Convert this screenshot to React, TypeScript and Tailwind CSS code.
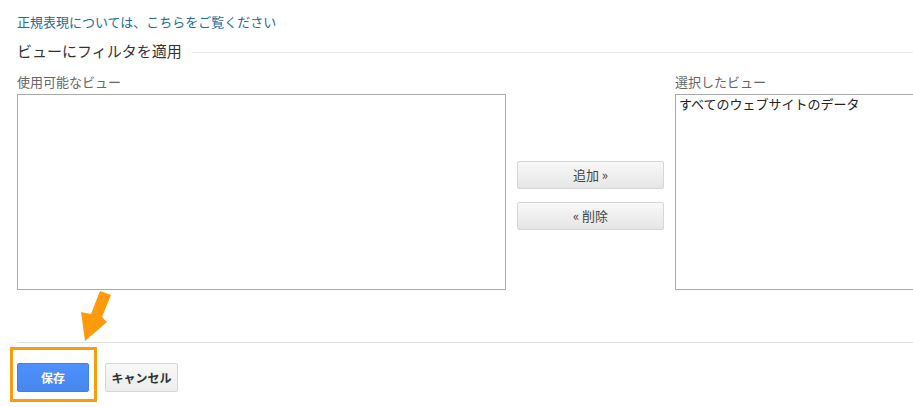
import React from 'react';

const font = { fontFamily: '"Noto Sans CJK JP", "Noto Sans", sans-serif' };

const ArrowMark: React.FC = () => (
  <svg
    className="absolute left-[78px] top-[288px]"
    width="36"
    height="56"
    viewBox="78 288 36 56"
  >
    <polygon
      points="100,291 111,295 102,317 107,322 85,341 81,312 91,314"
      fill="#ff9a0a"
    />
  </svg>
);

const App: React.FC = () => {
  return (
    <div className="relative w-[913px] h-[407px] overflow-hidden bg-white" style={font}>
      {/* Help link */}
      <div className="pl-[17px] pt-[8px] h-[40px]">
        <a className="text-[13px] leading-[20px] text-[#236b98] cursor-pointer">
          正規表現については、こちらをご覧ください
        </a>
      </div>

      {/* Section heading */}
      <div className="flex items-center pl-[17px] h-[24px]">
        <h2 className="text-[15px] leading-[20px] text-[#333] -mt-[2px]">ビューにフィルタを適用</h2>
        <div className="flex-1 ml-[10px] h-px bg-[#e5e5e5]" />
      </div>

      {/* View selector */}
      <div className="flex pl-[17px] pt-[10px]">
        <div className="flex flex-col w-[489px] shrink-0">
          <div className="text-[13px] leading-[16px] text-[#666] mb-[4px]">使用可能なビュー</div>
          <div className="h-[196px] border border-[#a9a9a9] bg-white" />
        </div>

        <div className="flex flex-col gap-[13px] w-[147px] ml-[11px] pt-[87px] shrink-0">
          <button className="h-[28px] border border-[#d6d6d6] rounded-[2px] bg-gradient-to-b from-[#f8f8f8] to-[#e6e6e6] text-[13px] text-[#444]">
            追加 »
          </button>
          <button className="h-[28px] border border-[#d6d6d6] rounded-[2px] bg-gradient-to-b from-[#f8f8f8] to-[#e6e6e6] text-[13px] text-[#444]">
            « 削除
          </button>
        </div>

        <div className="flex flex-col w-[300px] ml-[11px] shrink-0">
          <div className="text-[13px] leading-[16px] text-[#666] mb-[4px]">選択したビュー</div>
          <div className="h-[196px] border border-[#a9a9a9] bg-white px-[3px] py-[1px]">
            <div className="text-[13px] leading-[16px] text-[#222]">すべてのウェブサイトのデータ</div>
          </div>
        </div>
      </div>

      {/* Footer */}
      <div className="ml-[17px] mt-[52px] h-px bg-[#e0e0e0]" />
      <div className="flex items-center gap-[16px] pl-[17px] pt-[20px]">
        <button className="w-[72px] h-[29px] rounded-[2px] border border-[#3f7fe8] bg-gradient-to-b from-[#4d90fe] to-[#4787ed] text-white text-[12px] font-bold">
          保存
        </button>
        <button className="w-[73px] h-[29px] rounded-[2px] border border-[#d6d6d6] bg-gradient-to-b from-[#f8f8f8] to-[#ececec] text-[#333] text-[12px] font-bold">
          キャンセル
        </button>
      </div>

      {/* Highlight box and arrow */}
      <div className="absolute left-[10px] top-[347px] w-[87px] h-[55px] border-[3px] border-[#ff9a0a]" />
      <ArrowMark />
    </div>
  );
};

export default App;
